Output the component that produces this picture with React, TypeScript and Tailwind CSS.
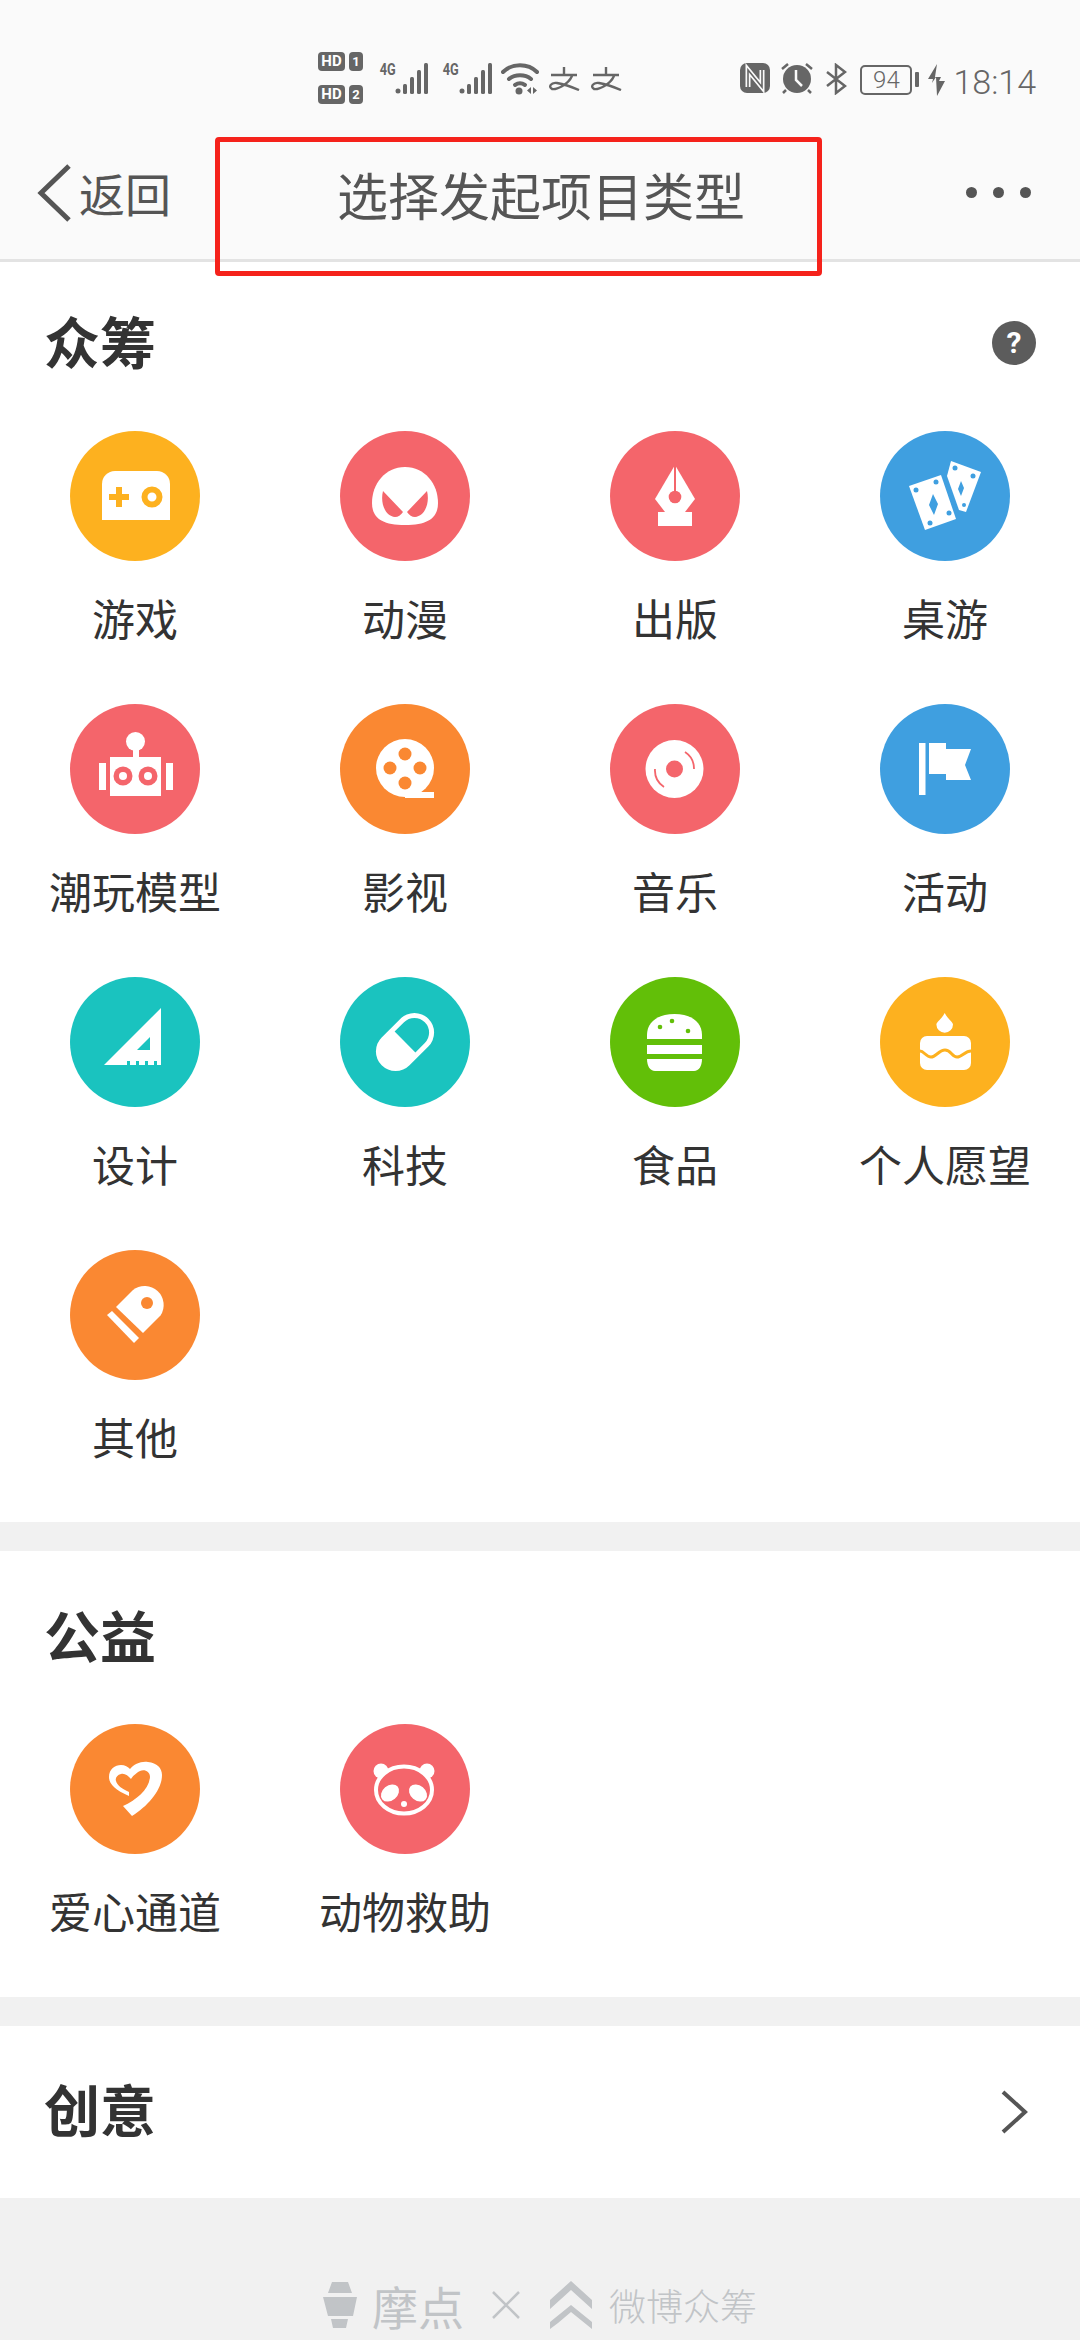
import type { ReactNode } from 'react';

const YELLOW = '#fdb11f';
const CORAL = '#f4656b';
const BLUE = '#3f9fe0';
const ORANGE = '#fa8832';
const TEAL = '#1ac3bf';
const GREEN = '#62bf08';

const CROWDFUND = [
  { label: '游戏', color: YELLOW, icon: <GameIcon /> },
  { label: '动漫', color: CORAL, icon: <MaskIcon /> },
  { label: '出版', color: CORAL, icon: <PenIcon /> },
  { label: '桌游', color: BLUE, icon: <CardsIcon /> },
  { label: '潮玩模型', color: CORAL, icon: <RobotIcon /> },
  { label: '影视', color: ORANGE, icon: <FilmIcon /> },
  { label: '音乐', color: CORAL, icon: <DiscIcon /> },
  { label: '活动', color: BLUE, icon: <FlagIcon /> },
  { label: '设计', color: TEAL, icon: <RulerIcon /> },
  { label: '科技', color: TEAL, icon: <PillIcon /> },
  { label: '食品', color: GREEN, icon: <BurgerIcon /> },
  { label: '个人愿望', color: YELLOW, icon: <CakeIcon /> },
  { label: '其他', color: ORANGE, icon: <BulletIcon /> },
];

const CHARITY = [
  { label: '爱心通道', color: ORANGE, icon: <HeartIcon /> },
  { label: '动物救助', color: CORAL, icon: <PandaIcon /> },
];

function GameIcon() {
  return (
    <>
      <path d="M32 89V53a13 13 0 0 1 13-13h42a13 13 0 0 1 13 13v36z" fill="#fff" />
      <path d="M46 56h6v7h7v6h-7v7h-6v-7h-7v-6h7z" fill={YELLOW} />
      <circle cx="82" cy="66" r="7.500" fill="none" stroke={YELLOW} strokeWidth="6" />
    </>
  );
}

function MaskIcon() {
  return (
    <>
      <path d="M65 36c20 0 33 17 33 36 0 15-10 22-33 22s-33-7-33-22c0-19 13-36 33-36z" fill="#fff" />
      <path d="M43 60l20 21c-2 3-5 5-8 5-10-1-15-14-12-26zM87 60L67 81c2 3 5 5 8 5 10-1 15-14 12-26z" fill={CORAL} />
    </>
  );
}

function PenIcon() {
  return (
    <>
      <path d="M65 34l20 34-10 13H55L45 68z" fill="#fff" />
      <rect x="48" y="81" width="34" height="14" fill="#fff" />
      <circle cx="65" cy="66" r="6.300" fill={CORAL} />
      <rect x="64" y="32" width="2" height="30" fill={CORAL} />
    </>
  );
}

function CardsIcon() {
  return (
    <>
      <path d="M71 30l30 11-15 40-7-2-12-34z" fill="#fff" />
      <path d="M29 55l32-11 15 44-31 11z" fill="#fff" />
      <path d="M53 63l5 10-4 11-5-10zM81 50l3 7-3 8-3-7z" fill={BLUE} />
      <circle cx="36" cy="59" r="2.500" fill={BLUE} />
      <circle cx="56" cy="51" r="2.500" fill={BLUE} />
      <circle cx="69" cy="82" r="2.500" fill={BLUE} />
      <circle cx="50" cy="92" r="2.500" fill={BLUE} />
      <circle cx="75" cy="37" r="2.500" fill={BLUE} />
      <circle cx="93" cy="45" r="2.500" fill={BLUE} />
      <circle cx="84" cy="74" r="2" fill={BLUE} />
    </>
  );
}

function RobotIcon() {
  return (
    <>
      <circle cx="65.500" cy="37.500" r="9.500" fill="#fff" />
      <rect x="63" y="44" width="6" height="10" fill="#fff" />
      <rect x="40" y="53" width="51" height="39" fill="#fff" />
      <rect x="29" y="59" width="7" height="27" fill="#fff" />
      <rect x="96" y="59" width="7" height="27" fill="#fff" />
      <circle cx="53" cy="72" r="9.500" fill={CORAL} />
      <circle cx="78" cy="72" r="9.500" fill={CORAL} />
      <circle cx="53" cy="72" r="4" fill="#fff" />
      <circle cx="78" cy="72" r="4" fill="#fff" />
    </>
  );
}

function FilmIcon() {
  return (
    <>
      <circle cx="65" cy="64" r="29" fill="#fff" />
      <path d="M65 88h29v6H65z" fill="#fff" />
      <circle cx="65" cy="50" r="6.500" fill={ORANGE} />
      <circle cx="65" cy="79" r="6.500" fill={ORANGE} />
      <circle cx="50" cy="64" r="6.500" fill={ORANGE} />
      <circle cx="80" cy="64" r="6.500" fill={ORANGE} />
    </>
  );
}

function DiscIcon() {
  return (
    <>
      <circle cx="64.500" cy="65" r="29" fill="#fff" />
      <circle cx="64.500" cy="65" r="8.500" fill={CORAL} />
      <path d="M75 48a20 20 0 0 1 9 17M45 65a20 20 0 0 0 9 18" fill="none" stroke={CORAL} strokeWidth="1.800" />
    </>
  );
}

function FlagIcon() {
  return (
    <>
      <rect x="39" y="39" width="6.500" height="52" fill="#fff" />
      <path d="M49 39h17v6h25l-6 16 6 15H66v-6H49z" fill="#fff" />
    </>
  );
}

function RulerIcon() {
  return (
    <>
      <path d="M91 31v57h-4v-4h-3v4h-6v-4h-3v4h-6v-4h-3v4h-6v-4h-3v4H34z" fill="#fff" />
      <path d="M80 60v13H67z" fill={TEAL} />
    </>
  );
}

function PillIcon() {
  return (
    <g transform="rotate(45 65 65)">
      <rect x="45.300" y="32" width="39.400" height="66" rx="19.700" fill="#fff" />
      <path d="M50.300 65V51.700a14.700 14.700 0 0 1 29.400 0V65z" fill={TEAL} />
    </g>
  );
}

function BurgerIcon() {
  return (
    <>
      <path d="M37 62v-4c0-13 11-21 27.500-21S92 45 92 58v4z" fill="#fff" />
      <rect x="37" y="68" width="55" height="9" fill="#fff" />
      <path d="M37 82h55c0 7-3 12-8 12H45c-5 0-8-5-8-12z" fill="#fff" />
      <circle cx="50" cy="50" r="2.300" fill={GREEN} />
      <circle cx="62" cy="44" r="2.300" fill={GREEN} />
      <circle cx="78" cy="54" r="2.300" fill={GREEN} />
    </>
  );
}

function CakeIcon() {
  return (
    <>
      <path d="M64.700 36c3 6 8.300 9 8.300 11.500a8.300 8.300 0 0 1-16.600 0c0-2.500 5.300-5.500 8.300-11.500z" fill="#fff" />
      <rect x="40" y="59" width="51" height="34" rx="7" fill="#fff" />
      <path d="M40 74c4 0 6 6 11 6s8-7 14-7 7 7 12 7 8-6 14-6" fill="none" stroke={YELLOW} strokeWidth="3" />
    </>
  );
}

function BulletIcon() {
  return (
    <>
      <path d="M46 57l17-17a19 19 0 0 1 27.500 25.500L73 83z" fill="#fff" />
      <path d="M37 65l5-4 27 27-5 5z" fill="#fff" />
      <circle cx="77" cy="53" r="6" fill={ORANGE} />
    </>
  );
}

function HeartIcon() {
  return (
    <path
      d="M59 72C45 66 39 60 39 53c0-8 6-12 12-12 4 0 7 2 9 4 4-5 11-8 18-7 9 1 14 6 14 13 0 15-14 31-30 41l-9-10c13-6 26-16 27-29 0-6-6-8-10-6-4 2-8 6-9 8-3-3-6-6-10-5-4 1-6 4-5 7 1 4 6 8 13 11z"
      fill="#fff"
    />
  );
}

function PandaIcon() {
  return (
    <>
      <circle cx="41" cy="47" r="7.500" fill="#fff" />
      <circle cx="87" cy="47" r="7.500" fill="#fff" />
      <ellipse cx="64" cy="66" rx="28" ry="23.500" fill={CORAL} stroke="#fff" strokeWidth="4" />
      <ellipse cx="50" cy="69" rx="10" ry="7.500" transform="rotate(-40 50 69)" fill="#fff" />
      <ellipse cx="78" cy="69" rx="10" ry="7.500" transform="rotate(40 78 69)" fill="#fff" />
      <circle cx="64" cy="80" r="3" fill="#fff" />
    </>
  );
}

function Signal() {
  return (
    <div className="flex items-start">
      <span className="text-[17px] leading-[16px] font-bold text-[#666] mt-[-2px] [font-family:'Roboto',sans-serif] scale-x-75">4G</span>
      <svg width="33" height="32" viewBox="0 0 33 32" className="ml-[-3px]">
        <g fill="#666">
          <circle cx="3" cy="28" r="2.500" />
          <rect x="8" y="21" width="4" height="10" rx="1.500" />
          <rect x="15" y="14" width="4" height="17" rx="1.500" />
          <rect x="22" y="7" width="4" height="24" rx="1.500" />
          <rect x="29" y="0" width="4" height="31" rx="1.500" />
        </g>
      </svg>
    </div>
  );
}

function HdBadge({ n }: { n: number }) {
  return (
    <div className="flex gap-[4px] text-white text-[15px] leading-[19px] font-bold [font-family:'Roboto',sans-serif]">
      <span className="w-[27px] h-[19px] rounded-[4px] bg-[#666] text-center">HD</span>
      <span className="w-[14px] h-[19px] rounded-[4px] bg-[#666] text-center text-[13px]">{n}</span>
    </div>
  );
}

function AlipayIcon({ className }: { className: string }) {
  return (
    <svg width="32" height="24" viewBox="0 0 32 24" className={className}>
      <path
        d="M16 0v9M3 8h26M24 9C20 18 8 23 4 22 0 20 3 15 9 16c6 1 15 4 22 7"
        fill="none"
        stroke="#666"
        strokeWidth="2.400"
      />
    </svg>
  );
}

function StatusBar() {
  return (
    <div className="h-[130px] pl-[318px] pr-[44px] pt-[52px] flex items-start text-[#666]">
      <div className="flex flex-col gap-[14px] w-[59px]">
        <HdBadge n={1} />
        <HdBadge n={2} />
      </div>
      <div className="flex gap-[12px] mt-[11px]">
        <Signal />
        <Signal />
      </div>
      <svg width="40" height="32" viewBox="0 0 40 32" className="ml-[9px] mt-[11px]">
        <g fill="none" stroke="#666" strokeWidth="4" strokeLinecap="round">
          <path d="M2 9c9-9 25-9 34 0" />
          <path d="M8 16c6-5 16-5 22 0" />
          <path d="M14 22c3-2 7-2 10 0" />
        </g>
        <circle cx="18" cy="28" r="3.500" fill="#666" />
        <path d="M30 24v7l-4-3.500zM32 24v7l4-3.500z" fill="#666" />
      </svg>
      <AlipayIcon className="ml-[7px] mt-[15px]" />
      <AlipayIcon className="ml-[10px] mt-[15px]" />
      <div className="flex-1" />
      <svg width="30" height="30" viewBox="0 0 30 30" className="mt-[11px]">
        <rect width="30" height="30" rx="7" fill="#666" />
        <path d="M8 24V7l14 17V7" fill="none" stroke="#fafafa" strokeWidth="5" />
        <path d="M8 24V7l14 17V7" fill="none" stroke="#666" strokeWidth="1.600" />
      </svg>
      <svg width="34" height="32" viewBox="0 0 34 32" className="ml-[10px] mt-[10px]">
        <circle cx="17" cy="17" r="14" fill="#666" />
        <path d="M16 8v10l6 6" fill="none" stroke="#fafafa" strokeWidth="2.500" />
        <path d="M2 7l6-5M32 7l-6-5M6 28l-3 3M28 28l3 3" stroke="#666" strokeWidth="2.500" />
      </svg>
      <svg width="22" height="32" viewBox="0 0 22 32" className="ml-[11px] mt-[11px]">
        <path d="M2 9l18 14-9 7V2l9 7-18 14" fill="none" stroke="#666" strokeWidth="2.500" />
      </svg>
      <div className="ml-[13px] mt-[13px] w-[52px] h-[30px] rounded-[5px] border-[2.500px] border-[#666] flex items-center justify-center text-[24px] leading-none font-light [font-family:'Roboto',sans-serif]">
        94
      </div>
      <div className="ml-[3px] mt-[20px] w-[4px] h-[15px] rounded-[1px] bg-[#666]" />
      <svg width="17" height="32" viewBox="0 0 17 32" className="ml-[9px] mt-[12px]">
        <path d="M9 0L0 15h5l-1 4 4-6 1 19 8-15h-6l2-4H7z" fill="#666" />
      </svg>
      <span className="ml-[8px] mt-[10px] text-[34px] leading-[40px] [font-family:'Roboto',sans-serif] font-light">18:14</span>
    </div>
  );
}

function Header() {
  return (
    <header className="relative bg-[#fafafa] h-[262px] border-b-[3px] border-[#e3e3e3]">
      <StatusBar />
      <nav className="h-[129px] flex items-center text-[#555] pb-[4px]">
        <svg width="36" height="60" viewBox="0 0 36 60" className="ml-[36px] shrink-0">
          <path d="M33 3L5 30l28 27" fill="none" stroke="#555" strokeWidth="5" />
        </svg>
        <span className="text-[46px] ml-[7px] w-[92px]">返回</span>
        <h1 className="text-[51px] font-normal text-center ml-[166px] w-[408px] mt-[3px] whitespace-nowrap">选择发起项目类型</h1>
        <div className="ml-auto mr-[49px] flex gap-[16px]">
          <span className="w-[11px] h-[11px] rounded-full bg-[#555]" />
          <span className="w-[11px] h-[11px] rounded-full bg-[#555]" />
          <span className="w-[11px] h-[11px] rounded-full bg-[#555]" />
        </div>
      </nav>
      {/* red annotation box drawn over the screenshot */}
      <div className="absolute left-[215px] top-[137px] w-[607px] h-[139px] border-[5px] border-[#f5221b] rounded-[4px]" />
    </header>
  );
}

function Category({ label, color, icon }: { label: string; color: string; icon: ReactNode }) {
  return (
    <div className="h-[273px] pt-[14px] flex flex-col items-center">
      <svg width="130" height="130" viewBox="0 0 130 130" className="shrink-0">
        <circle cx="65" cy="65" r="65" fill={color} />
        {icon}
      </svg>
      <span className="mt-[28px] text-[43px] leading-[56px] text-[#333] whitespace-nowrap">{label}</span>
    </div>
  );
}

export default function App() {
  return (
    <div className="w-[1080px] h-[2340px] overflow-hidden bg-[#f1f1f1] [font-family:'Noto_Sans_CJK_SC','Noto_Sans',sans-serif]">
      <Header />

      <section className="bg-white h-[1260px]">
        <div className="h-[155px] pl-[44px] pr-[44px] pt-[46px] flex justify-between items-start">
          <h2 className="text-[56px] leading-[64px] font-bold text-[#333]">众筹</h2>
          <span className="mt-[13px] w-[44px] h-[44px] rounded-full bg-[#5c5c5c] text-white text-[30px] leading-[44px] text-center font-bold [font-family:'Roboto',sans-serif]">?</span>
        </div>
        <div className="grid grid-cols-4">
          {CROWDFUND.map((c) => (
            <Category key={c.label} {...c} />
          ))}
        </div>
      </section>

      <section className="bg-white mt-[29px] h-[446px]">
        <div className="h-[159px] pl-[44px] pt-[51px]">
          <h2 className="text-[56px] leading-[64px] font-bold text-[#333]">公益</h2>
        </div>
        <div className="grid grid-cols-4">
          {CHARITY.map((c) => (
            <Category key={c.label} {...c} />
          ))}
        </div>
      </section>

      <section className="bg-white mt-[29px] h-[172px] pl-[44px] pr-[52px] flex items-center justify-between">
        <h2 className="text-[56px] leading-[64px] font-bold text-[#333] mb-[8px]">创意</h2>
        <svg width="28" height="44" viewBox="0 0 28 44">
          <path d="M3 2l22 20L3 42" fill="none" stroke="#555" strokeWidth="4" />
        </svg>
      </section>

      <footer className="pt-[82px] flex items-center justify-center text-[#c1c4c7]">
        <svg width="34" height="46" viewBox="0 0 34 46">
          <path d="M9 0h16l4 11H5zM0 15h34l-4 19H5zM8 37h17l-2 9H10z" fill="#c1c4c7" />
        </svg>
        <span className="ml-[15px] text-[46px] leading-[50px]">摩点</span>
        <svg width="30" height="30" viewBox="0 0 30 30" className="ml-[27px]">
          <path d="M2 2l26 26M28 2L2 28" stroke="#c1c4c7" strokeWidth="2.500" />
        </svg>
        <svg width="42" height="48" viewBox="0 0 42 48" className="ml-[29px]">
          <path d="M21 0l21 19v9L21 9 0 28v-9zM21 24l21 17v7L21 31 8 42l-8 6v-7z" fill="#c1c4c7" />
        </svg>
        <span className="ml-[17px] text-[37px] leading-[50px] font-light">微博众筹</span>
      </footer>
    </div>
  );
}
